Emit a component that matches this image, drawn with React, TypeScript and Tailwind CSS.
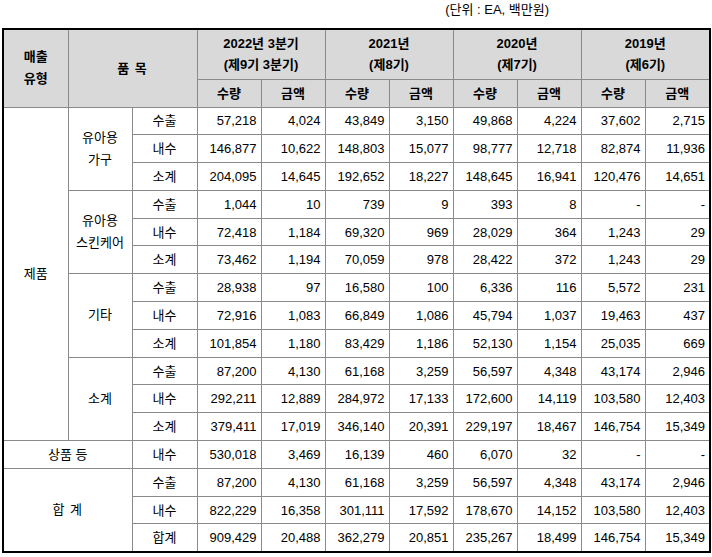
import React from "react";

type Row = { label: string; values: string[] };
type Group = { name: string[]; rows: Row[] };

const groups: Group[] = [
  {
    name: ["유아용", "가구"],
    rows: [
      { label: "수출", values: ["57,218", "4,024", "43,849", "3,150", "49,868", "4,224", "37,602", "2,715"] },
      { label: "내수", values: ["146,877", "10,622", "148,803", "15,077", "98,777", "12,718", "82,874", "11,936"] },
      { label: "소계", values: ["204,095", "14,645", "192,652", "18,227", "148,645", "16,941", "120,476", "14,651"] },
    ],
  },
  {
    name: ["유아용", "스킨케어"],
    rows: [
      { label: "수출", values: ["1,044", "10", "739", "9", "393", "8", "-", "-"] },
      { label: "내수", values: ["72,418", "1,184", "69,320", "969", "28,029", "364", "1,243", "29"] },
      { label: "소계", values: ["73,462", "1,194", "70,059", "978", "28,422", "372", "1,243", "29"] },
    ],
  },
  {
    name: ["기타"],
    rows: [
      { label: "수출", values: ["28,938", "97", "16,580", "100", "6,336", "116", "5,572", "231"] },
      { label: "내수", values: ["72,916", "1,083", "66,849", "1,086", "45,794", "1,037", "19,463", "437"] },
      { label: "소계", values: ["101,854", "1,180", "83,429", "1,186", "52,130", "1,154", "25,035", "669"] },
    ],
  },
  {
    name: ["소계"],
    rows: [
      { label: "수출", values: ["87,200", "4,130", "61,168", "3,259", "56,597", "4,348", "43,174", "2,946"] },
      { label: "내수", values: ["292,211", "12,889", "284,972", "17,133", "172,600", "14,119", "103,580", "12,403"] },
      { label: "소계", values: ["379,411", "17,019", "346,140", "20,391", "229,197", "18,467", "146,754", "15,349"] },
    ],
  },
];

const goods: Row = { label: "내수", values: ["530,018", "3,469", "16,139", "460", "6,070", "32", "-", "-"] };

const totals: Row[] = [
  { label: "수출", values: ["87,200", "4,130", "61,168", "3,259", "56,597", "4,348", "43,174", "2,946"] },
  { label: "내수", values: ["822,229", "16,358", "301,111", "17,592", "178,670", "14,152", "103,580", "12,403"] },
  { label: "합계", values: ["909,429", "20,488", "362,279", "20,851", "235,267", "18,499", "146,754", "15,349"] },
];

const periods = [
  ["2022년 3분기", "(제9기 3분기)"],
  ["2021년", "(제8기)"],
  ["2020년", "(제7기)"],
  ["2019년", "(제6기)"],
];

const cell = "border border-[#8a8a8a] p-0";
const head = `${cell} bg-[#d9d9d9] font-bold text-center`;

const Values = ({ values }: { values: string[] }) => (
  <>
    {values.map((v, i) => (
      <td key={i} className={`${cell} text-right pr-[4px]`}>
        {v}
      </td>
    ))}
  </>
);

export default function App() {
  return (
    <div
      className="w-[712px] h-[557px] bg-white text-black text-[13px] leading-none overflow-hidden"
      style={{ fontFamily: '"Liberation Sans", "Noto Sans CJK KR", sans-serif' }}
    >
      <div className="h-[28px] flex justify-end pr-[163px] pt-[3px] text-[13px]">(단위 : EA, 백만원)</div>
      <div className="pl-[2px]">
        <table className="w-[707px] table-fixed border-collapse border-2 border-black">
          <colgroup>
            <col className="w-[65px]" />
            <col className="w-[64px]" />
            <col className="w-[65px]" />
            {Array.from({ length: 7 }).map((_, i) => (
              <col key={i} className="w-[64px]" />
            ))}
            <col className="w-[65px]" />
          </colgroup>
          <thead>
            <tr className="h-[50px]">
              <th rowSpan={2} className={`${head} border-l-2 border-t-2 border-l-black border-t-black leading-[22px]`}>
                매출
                <br />
                유형
              </th>
              <th rowSpan={2} colSpan={2} className={`${head} border-t-2 border-t-black tracking-[1px]`}>
                품 목
              </th>
              {periods.map((p, i) => (
                <th
                  key={i}
                  colSpan={2}
                  className={`${head} border-t-2 border-t-black leading-[21px] ${i === 3 ? "border-r-2 border-r-black" : ""}`}
                >
                  {p[0]}
                  <br />
                  {p[1]}
                </th>
              ))}
            </tr>
            <tr className="h-[28px]">
              {periods.map((_, i) => (
                <React.Fragment key={i}>
                  <th className={head}>수량</th>
                  <th className={`${head} ${i === 3 ? "border-r-2 border-r-black" : ""}`}>금액</th>
                </React.Fragment>
              ))}
            </tr>
          </thead>
          <tbody>
            {groups.map((g, gi) =>
              g.rows.map((r, ri) => (
                <tr key={`${gi}-${ri}`} className="h-[27.8px]">
                  {gi === 0 && ri === 0 && (
                    <td rowSpan={12} className={`${cell} text-center border-l-2 border-l-black`}>
                      제품
                    </td>
                  )}
                  {ri === 0 && (
                    <td rowSpan={3} className={`${cell} text-center leading-[22px]`}>
                      {g.name.map((n, ni) => (
                        <div key={ni}>{n}</div>
                      ))}
                    </td>
                  )}
                  <td className={`${cell} text-center`}>{r.label}</td>
                  <Values values={r.values} />
                </tr>
              ))
            )}
            <tr className="h-[27.8px]">
              <td colSpan={2} className={`${cell} text-center border-l-2 border-l-black`}>
                상품 등
              </td>
              <td className={`${cell} text-center`}>{goods.label}</td>
              <Values values={goods.values} />
            </tr>
            {totals.map((r, ri) => (
              <tr key={ri} className="h-[27.8px]">
                {ri === 0 && (
                  <td rowSpan={3} colSpan={2} className={`${cell} text-center border-l-2 border-l-black border-b-2 border-b-black tracking-[1px]`}>
                    합 계
                  </td>
                )}
                <td className={`${cell} text-center`}>{r.label}</td>
                <Values values={r.values} />
              </tr>
            ))}
          </tbody>
        </table>
      </div>
    </div>
  );
}
